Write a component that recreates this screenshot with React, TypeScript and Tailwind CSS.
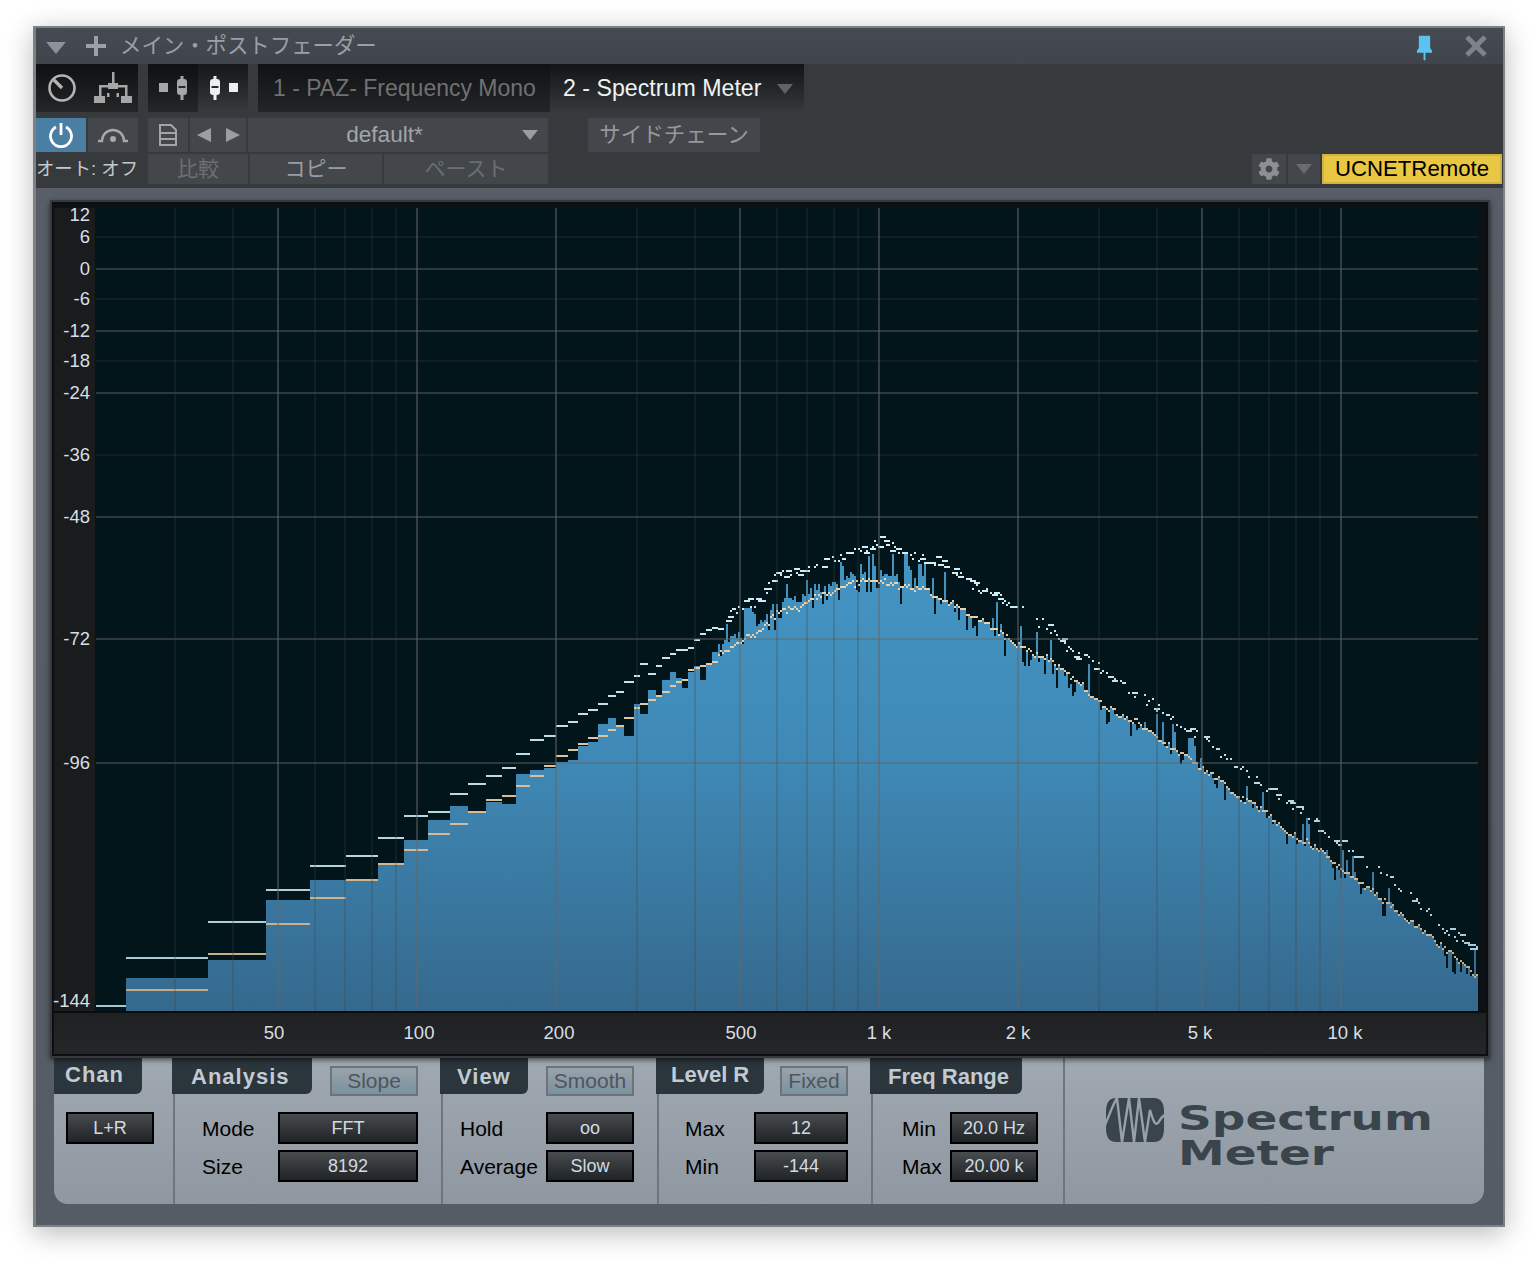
import React from 'react';
import { FaCog } from 'react-icons/fa';

type Seg = [number, number, number, number, number];

// low end of the spectrum: [x0, x1, bar top, average line, peak line]
const LOW_BINS: Seg[] = [
  [96, 126, 1012, 0, 1005], [126, 208, 978, 989, 957], [208, 266, 960, 953, 921], [266, 310, 900, 923, 889],
  [310, 346, 880, 897, 865], [346, 378, 881, 879, 855], [378, 404, 863, 863, 837], [404, 428, 840, 849, 815],
  [428, 450, 820, 833, 811], [450, 468, 806, 823, 793], [468, 486, 812, 811, 783], [486, 502, 802, 799, 775],
  [502, 516, 804, 795, 767], [516, 530, 774, 785, 753], [530, 544, 770, 775, 739], [544, 556, 768, 765, 735],
  [556, 568, 762, 755, 725], [568, 578, 760, 749, 721], [578, 588, 746, 743, 713], [588, 598, 742, 737, 709],
  [598, 608, 724, 735, 703], [608, 616, 718, 729, 695], [616, 624, 726, 725, 691], [624, 634, 736, 717, 681],
  [634, 640, 704, 707, 675], [640, 648, 714, 703, 663], [648, 656, 690, 699, 673], [656, 662, 696, 695, 665],
  [662, 670, 680, 691, 657], [670, 676, 672, 685, 653], [676, 682, 678, 681, 649], [682, 688, 688, 679, 649],
  [688, 694, 672, 669, 647], [694, 700, 666, 667, 639], [700, 706, 680, 665, 633], [706, 712, 664, 663, 629],
  [712, 718, 652, 661, 627],
];

const AVG_CURVE = [[718, 655], [740, 640], [757, 633], [777, 611], [800, 607], [813, 598], [827, 593], [840, 587], [853, 583], [870, 579], [883, 581], [907, 587], [927, 590], [940, 597], [957, 605], [973, 615], [997, 630], [1017, 645], [1033, 652], [1047, 657], [1067, 675], [1080, 683], [1100, 702], [1120, 715], [1140, 723], [1157, 738], [1180, 752], [1200, 767], [1217, 778], [1233, 793], [1253, 803], [1267, 813], [1283, 828], [1303, 840], [1323, 852], [1340, 867], [1360, 882], [1380, 898], [1400, 913], [1420, 928], [1440, 945], [1460, 962], [1478, 978]];
const PEAK_CURVE = [[718, 625], [740, 603], [757, 601], [777, 575], [800, 572], [813, 568], [833, 557], [850, 553], [870, 547], [880, 540], [900, 550], [920, 557], [940, 560], [967, 580], [987, 590], [1007, 602], [1027, 613], [1047, 627], [1067, 647], [1100, 668], [1150, 702], [1180, 723], [1207, 740], [1233, 765], [1267, 787], [1300, 807], [1327, 833], [1360, 857], [1387, 877], [1420, 903], [1447, 930], [1478, 948]];
const SPIKES: Record<number, number> = { 744: 608, 746: 608, 748: 608, 750: 608, 752: 612, 754: 614, 872: 554, 874: 566, 904: 552, 906: 552, 908: 565, 910: 570, 920: 564, 1188: 738, 1190: 738, 1192: 738, 1194: 745 };

function interp(pts: number[][], x: number) {
  for (let i = 1; i < pts.length; i++) {
    if (x <= pts[i][0]) {
      const t = (x - pts[i - 1][0]) / (pts[i][0] - pts[i - 1][0]);
      return pts[i - 1][1] + t * (pts[i][1] - pts[i - 1][1]);
    }
  }
  return pts[pts.length - 1][1];
}

// fixed seed so the noisy part of the spectrum is the same on every load
let seed = 41;
function rnd() {
  seed = (seed * 1664525 + 1013904223) % 4294967296;
  return seed / 4294967296;
}
const snap = (v: number) => Math.round(v / 2) * 2;

const highBins: Seg[] = [];
const peakDots: number[][] = [];
for (let x = 718; x < 1478; x += 2) {
  const avg = snap(interp(AVG_CURVE, x) + (rnd() - 0.5) * 6);
  const peak = interp(PEAK_CURVE, x);
  const r = rnd();
  let top = avg;
  const lift = x < 900 ? 8 : 0;
  if (r < 0.14) top = avg - 4 - rnd() * Math.max(avg - peak - 8, 4);
  else if (r < 0.36) top = avg + 4 + rnd() * (x < 900 ? 8 : 16);
  else top = avg - lift * rnd() - (x < 900 ? 3 : 0);
  if (SPIKES[x]) top = SPIKES[x];
  highBins.push([x, x + 2, snap(top), avg, 0]);
  if (rnd() < (x < 1000 ? 0.72 : 0.6)) {
    const y = snap(peak + (rnd() - 0.5) * 10);
    peakDots.push([x, y, rnd() < (x < 1000 ? 0.45 : 0.15) ? 6 : 2]);
  }
}

const freqX = (f: number) => 417 + 462 * Math.log10(f / 100);
const MINOR_F = [30, 40, 60, 70, 80, 90, 300, 400, 600, 700, 800, 900, 3000, 4000, 6000, 7000, 8000, 9000];
const MAJOR_F = [50, 100, 200, 500, 1000, 2000, 5000, 10000];
const DIM_Y = [237, 299, 361, 455];
const BRIGHT_Y = [269, 331, 393, 517, 639, 763];

const DB_LABELS: [string, number][] = [['12', 215], ['6', 237], ['0', 269], ['-6', 299], ['-12', 331], ['-18', 361], ['-24', 393], ['-36', 455], ['-48', 517], ['-72', 639], ['-96', 763], ['-144', 1001]];
const HZ_LABELS: [string, number][] = [['50', 274], ['100', 419], ['200', 559], ['500', 741], ['1 k', 879], ['2 k', 1018], ['5 k', 1200], ['10 k', 1345]];

function Spectrum() {
  return (
    <svg viewBox="95 208 1383 803" className="block w-[1383px] h-[803px]" shapeRendering="crispEdges">
      <defs>
        <linearGradient id="bar" gradientUnits="userSpaceOnUse" x1="0" y1="550" x2="0" y2="1010">
          <stop offset="0" stopColor="#4495c4" />
          <stop offset="0.45" stopColor="#3f89b6" />
          <stop offset="1" stopColor="#35698d" />
        </linearGradient>
        <linearGradient id="avg" gradientUnits="userSpaceOnUse" x1="0" y1="550" x2="0" y2="1010">
          <stop offset="0" stopColor="#f6d6ac" />
          <stop offset="1" stopColor="#c2a886" />
        </linearGradient>
        <linearGradient id="peak" gradientUnits="userSpaceOnUse" x1="0" y1="530" x2="0" y2="1010">
          <stop offset="0" stopColor="#d0f0fb" />
          <stop offset="1" stopColor="#a8c6d2" />
        </linearGradient>
      </defs>
      <rect x="95" y="208" width="1383" height="803" fill="#02151a" />
      {LOW_BINS.map(([a, b, top]) => <rect key={a} x={a} y={top} width={b - a} height={Math.max(1011 - top, 0)} fill="url(#bar)" />)}
      {highBins.map(([a, b, top]) => <rect key={a} x={a} y={top} width={b - a} height={1011 - top} fill="url(#bar)" />)}
      {LOW_BINS.map(([a, b, , avg]) => avg > 0 && <rect key={a} x={a} y={avg} width={b - a} height="2" fill="url(#avg)" />)}
      {highBins.map(([a, b, , avg]) => <rect key={a} x={a} y={avg} width={b - a} height="2" fill="url(#avg)" />)}
      {LOW_BINS.map(([a, b, , , p]) => <rect key={a} x={a} y={p} width={b - a} height="2" fill="url(#peak)" />)}
      {peakDots.map(([x, y, w]) => <rect key={x} x={x} y={y} width={w} height="2" fill="url(#peak)" />)}
      {DIM_Y.map((y) => <rect key={y} x="96" y={y - 1} width="1382" height="2" fill="#444" fillOpacity="0.25" />)}
      {BRIGHT_Y.map((y) => <rect key={y} x="96" y={y - 1} width="1382" height="2" fill="#666" fillOpacity="0.45" />)}
      {MINOR_F.map((f) => <rect key={f} x={Math.round(freqX(f)) - 1} y="208" width="2" height="803" fill="#444" fillOpacity="0.25" />)}
      {MAJOR_F.map((f) => <rect key={f} x={Math.round(freqX(f)) - 1} y="208" width="2" height="803" fill="#666" fillOpacity="0.5" />)}
    </svg>
  );
}

function Tri({ className, left, right }: { className: string; left?: boolean; right?: boolean }) {
  const pts = left ? '16,0 16,16 0,8' : right ? '0,0 16,8 0,16' : '0,0 18,0 9,11';
  return (
    <svg viewBox={left || right ? '0 0 16 16' : '0 0 18 11'} className={className} fill="currentColor">
      <polygon points={pts} />
    </svg>
  );
}

function StripIcon({ bright, flip }: { bright?: boolean; flip?: boolean }) {
  const c = bright ? '#eceeef' : '#a4a6a8';
  return (
    <svg width="29" height="24" viewBox="0 0 29 24" className={flip ? '-scale-x-100' : ''}>
      <rect x="0" y="7" width="9" height="9" fill={c} />
      <rect x="21.5" y="0" width="3" height="24" fill={c} />
      <rect x="18" y="3" width="10" height="16" rx="3" fill={c} />
      <rect x="19.5" y="10" width="7" height="2" fill="#26282a" />
    </svg>
  );
}

function PanelSelect({ label, className }: { label: string; className: string }) {
  return (
    <div className={'h-8 flex items-center justify-center border-2 border-black bg-gradient-to-b from-[#484c4f] via-[#33373a] to-[#212426] text-[18px] text-[#d3dae1] ' + className}>
      {label}
    </div>
  );
}

function Toggle({ label, className }: { label: string; className: string }) {
  return (
    <div className={'mt-2 h-[30px] flex items-center justify-center border-2 border-[#6d737a] bg-gradient-to-b from-[#9aa2aa] to-[#7a929f] text-[21px] text-[#4f555d] ' + className}>
      {label}
    </div>
  );
}

function PanelTab({ label, className }: { label: string; className: string }) {
  return (
    <div className={'h-9 flex items-center rounded-br-[6px] bg-[#2a353c] text-[22px] font-bold text-[#c2cad2] ' + className}>
      {label}
    </div>
  );
}

function Row({ label, value, labelW, selectW }: { label: string; value: string; labelW: string; selectW: string }) {
  return (
    <div className="flex items-center h-8">
      <span className={'mt-[2px] text-[21px] text-black ' + labelW}>{label}</span>
      <PanelSelect label={value} className={selectW} />
    </div>
  );
}

function Logo() {
  return (
    <div className="ml-[41px] mt-10 flex">
      <svg width="58" height="44" viewBox="0 0 58 44">
        <path d="M10 0 H48 C55 0 58 5 58 14 V30 C58 39 55 44 48 44 H10 C3 44 0 39 0 30 V14 C0 5 3 0 10 0 Z" fill="#3a444b" />
        <path d="M-1 27 C3 18 7 6 11 0 L16 44 L23 0 L28 44 L33 0 L39 44 L44 12 C47 22 49 28 52 25 C54 22 56 18 59 17" fill="none" stroke="#98a0a9" strokeWidth="2.4" />
      </svg>
      <div className="ml-[14px] mt-[3px] font-['DejaVu_Sans',sans-serif] font-bold text-[34px] leading-[35px] text-[#3a444b]">
        <div className="origin-left scale-x-[1.38]">Spectrum</div>
        <div className="origin-left scale-x-[1.38]">Meter</div>
      </div>
    </div>
  );
}

const btn = 'h-full flex items-center justify-center bg-[#43474b]';

export default function App() {
  return (
    <div className="w-[1538px] h-[1268px] bg-white pt-[26px] pl-[33px] font-['Liberation_Sans','Noto_Sans_CJK_JP',sans-serif] overflow-hidden">
      <div className="w-[1472px] h-[1201px] flex flex-col border-2 border-l-[3px] border-[#7d8186] shadow-[0_6px_26px_rgba(0,0,0,0.28)]">
        {/* title bar */}
        <div className="h-9 shrink-0 flex items-center bg-gradient-to-b from-[#464a52] to-[#40444b]">
          <Tri className="ml-[10px] w-5 h-3 mt-1 text-[#8d9299]" />
          <svg width="20" height="20" viewBox="0 0 20 20" className="ml-5 text-[#9ba1a8]" fill="currentColor">
            <rect x="8" y="0" width="4" height="20" />
            <rect x="0" y="8" width="20" height="4" />
          </svg>
          <span className="ml-[14px] text-[21.4px] text-[#9aa0a8]">メイン・ポストフェーダー</span>
          <svg width="17" height="26" viewBox="0 0 18 26" className="ml-auto mt-1 text-[#5bc4ee]" fill="currentColor">
            <path d="M3 0 H15 V13 L17 16 V18 H10 V26 H8 V18 H1 V16 L3 13 Z" />
          </svg>
          <svg width="22" height="22" viewBox="0 0 22 22" className="ml-[32px] mr-4 text-[#7f8388]">
            <path d="M2 2 L20 20 M20 2 L2 20" stroke="currentColor" strokeWidth="5" />
          </svg>
        </div>

        {/* toolbar */}
        <div className="h-[124px] shrink-0 bg-[#363a3d] pr-px">
          <div className="h-12 flex">
            <div className="w-[51px] flex items-center justify-center bg-gradient-to-b from-[#0f1011] to-[#242628]">
              <svg width="30" height="30" viewBox="0 0 30 30" fill="none" stroke="#b4b4b4" strokeWidth="2.6">
                <circle cx="15" cy="15" r="12.5" />
                <path d="M7 7 L15 15" strokeWidth="3.4" />
              </svg>
            </div>
            <div className="w-[51px] flex items-center justify-center bg-gradient-to-b from-[#0f1011] to-[#242628]">
              <svg width="38" height="32" viewBox="0 0 38 32" fill="#a6a6a6">
                <rect x="18" y="0" width="2.5" height="14" />
                <rect x="14" y="11" width="10" height="6" />
                <rect x="6" y="13" width="26" height="2.5" />
                <rect x="5" y="13" width="2.5" height="12" />
                <rect x="31" y="13" width="2.5" height="12" />
                <rect x="0" y="24" width="11" height="7" />
                <rect x="27" y="24" width="11" height="7" />
                <rect x="13" y="21" width="2.5" height="4" />
                <rect x="22.5" y="21" width="2.5" height="4" />
              </svg>
            </div>
            <div className="ml-[10px] w-[50px] flex items-center justify-center bg-gradient-to-b from-[#0f1011] to-[#242628]">
              <StripIcon />
            </div>
            <div className="w-[50px] flex items-center justify-center bg-gradient-to-b from-[#15171a] to-[#363a3d]">
              <StripIcon bright flip />
            </div>
            <div className="ml-[10px] w-[292px] flex items-center pl-[15px] bg-gradient-to-b from-[#111213] to-[#232527] text-[23px] text-[#6f7174]">
              1 - PAZ- Frequency Mono
            </div>
            <div className="w-[254px] flex items-center pl-[13px] bg-gradient-to-b from-[#131416] to-[#363a3d] text-[23.2px] text-[#eef2f5]">
              2 - Spectrum Meter
              <Tri className="ml-4 w-4 h-[10px] mt-[2px] text-[#5f6367]" />
            </div>
          </div>

          <div className="mt-[6px] h-[34px] flex">
            <div className="w-[50px] h-full flex items-center justify-center bg-[#4a7ea3]">
              <svg width="26" height="26" viewBox="0 0 26 26" fill="none" stroke="#fff" strokeWidth="2.8">
                <path d="M8 5 A10.5 10.5 0 1 0 18 5" />
                <path d="M13 1 V13" />
              </svg>
            </div>
            <div className={btn + ' ml-[2px] w-[50px]'}>
              <svg width="30" height="16" viewBox="0 0 30 16" fill="none" stroke="#a8a8a8" strokeWidth="2.4">
                <path d="M0 14 H4 A11 11 0 0 1 26 14 H30" />
                <circle cx="15" cy="12" r="3" fill="#a8a8a8" stroke="none" />
              </svg>
            </div>
            <div className={btn + ' ml-[10px] w-[40px]'}>
              <svg width="18" height="22" viewBox="0 0 18 22" fill="none" stroke="#a4a4a4" strokeWidth="2">
                <path d="M1 1 H12 L17 6 V21 H1 Z" />
                <path d="M1 9 H17 M1 15 H17" />
              </svg>
            </div>
            <div className={btn + ' ml-[2px] w-[56px] gap-[15px]'}>
              <Tri left className="w-[14px] h-[16px] text-[#9c9fa2]" />
              <Tri right className="w-[14px] h-[16px] text-[#9c9fa2]" />
            </div>
            <div className={btn + ' relative ml-[2px] w-[300px] pr-[27px] text-[22.6px] text-[#a2a5a8]'}>
              default*
              <Tri className="absolute right-[10px] top-[12px] w-4 h-[10px] text-[#9a9da0]" />
            </div>
            <div className={btn + ' ml-10 w-[172px] text-[21.5px] text-[#95999d]'}>サイドチェーン</div>
          </div>

          <div className="mt-[2px] h-[30px] flex text-[21px]">
            <div className="w-[102px] flex items-center justify-center text-[18.4px] text-[#c6c9cc] whitespace-nowrap">オート: オフ</div>
            <div className={btn + ' ml-[10px] w-[100px] text-[#6b6f73]'}>比較</div>
            <div className={btn + ' ml-[2px] w-[132px] text-[#9a9ea2]'}>コピー</div>
            <div className={btn + ' ml-[2px] w-[164px] text-[#6b6f73]'}>ペースト</div>
            <div className={btn + ' ml-auto w-[34px]'}>
              <FaCog className="w-[22px] h-[22px] text-[#8c9094]" />
            </div>
            <div className={btn + ' ml-[2px] w-[32px]'}>
              <Tri className="w-4 h-[10px] text-[#686c70]" />
            </div>
            <div className="ml-[2px] w-[180px] flex items-center justify-center border-2 border-[#cfb344] bg-[#e9c743] text-[22.2px] text-black">
              UCNETRemote
            </div>
          </div>
          <div className="h-1" />
        </div>

        {/* main pane */}
        <div className="flex-1 min-h-0 pt-3 bg-gradient-to-b from-[#585e68] to-[#565c66]">
          <div className="relative z-10 ml-[14px] w-[1440px] h-[858px] border-2 border-[#37393c] shadow-[0_2px_5px_rgba(0,0,0,0.55)]">
            <div className="w-full h-full border-2 border-[#0c0e10] flex flex-col bg-gradient-to-r from-[#1a1b1d] to-[#26272a]">
              <div className="h-1 shrink-0 bg-[#0b1114]" />
              <div className="flex h-[803px] shrink-0">
                <div className="relative w-[41px] shrink-0 text-[18.5px] text-[#d8dee4]">
                  {DB_LABELS.map(([t, y]) => (
                    <span key={t} className="absolute right-[5px] -translate-y-1/2 leading-none" style={{ top: y - 208 }}>{t}</span>
                  ))}
                </div>
                <Spectrum />
                <div className="flex-1 bg-[#0b1114]" />
              </div>
              <div className="relative flex-1 border-t-2 border-[#0a0c0e] text-[18.5px] text-[#d8dee4] bg-gradient-to-b from-[#1f2022] to-[#252628]">
                {HZ_LABELS.map(([t, x]) => (
                  <span key={t} className="absolute top-[20px] -translate-x-1/2 -translate-y-1/2 leading-none whitespace-nowrap" style={{ left: x - 54 }}>{t}</span>
                ))}
              </div>
            </div>
          </div>

          {/* control panel */}
          <div className="ml-[18px] w-[1430px] h-[146px] flex rounded-b-[14px] bg-gradient-to-b from-[#a0a8b1] to-[#8f97a0]">
            <div className="w-[119px] shrink-0">
              <PanelTab label="Chan" className="w-[88px] pl-[11px] pb-1 tracking-[1px]" />
              <div className="ml-3 mt-[18px]">
                <PanelSelect label="L+R" className="w-[88px]" />
              </div>
            </div>
            <div className="w-[268px] shrink-0 border-l-2 border-[#6f757c]">
              <div className="flex -ml-[3px]">
                <PanelTab label="Analysis" className="w-[140px] pl-[19px] tracking-[1px]" />
                <Toggle label="Slope" className="ml-[18px] w-[88px]" />
              </div>
              <div className="ml-[27px] mt-4 flex flex-col gap-[6px]">
                <Row label="Mode" value="FFT" labelW="w-[76px]" selectW="w-[140px]" />
                <Row label="Size" value="8192" labelW="w-[76px]" selectW="w-[140px]" />
              </div>
            </div>
            <div className="w-[216px] shrink-0 border-l-2 border-[#6f757c]">
              <div className="flex -ml-[3px]">
                <PanelTab label="View" className="w-[88px] pl-[17px] tracking-[1px]" />
                <Toggle label="Smooth" className="ml-[18px] w-[88px]" />
              </div>
              <div className="ml-[17px] mt-4 flex flex-col gap-[6px]">
                <Row label="Hold" value="oo" labelW="w-[86px]" selectW="w-[88px]" />
                <Row label="Average" value="Slow" labelW="w-[86px]" selectW="w-[88px]" />
              </div>
            </div>
            <div className="w-[214px] shrink-0 border-l-2 border-[#6f757c]">
              <div className="flex -ml-[3px]">
                <PanelTab label="Level R" className="w-[108px] pl-[15px] pb-1" />
                <Toggle label="Fixed" className="ml-4 w-[68px]" />
              </div>
              <div className="ml-[26px] mt-4 flex flex-col gap-[6px]">
                <Row label="Max" value="12" labelW="w-[69px]" selectW="w-[94px]" />
                <Row label="Min" value="-144" labelW="w-[69px]" selectW="w-[94px]" />
              </div>
            </div>
            <div className="w-[192px] shrink-0 border-l-2 border-[#6f757c]">
              <div className="flex -ml-[3px]">
                <PanelTab label="Freq Range" className="w-[152px] pl-[18px]" />
              </div>
              <div className="ml-[29px] mt-[18px] flex flex-col gap-[6px]">
                <Row label="Min" value="20.0 Hz" labelW="w-[48px]" selectW="w-[88px]" />
                <Row label="Max" value="20.00 k" labelW="w-[48px]" selectW="w-[88px]" />
              </div>
            </div>
            <div className="flex-1 border-l-2 border-[#6f757c]">
              <Logo />
            </div>
          </div>
        </div>
      </div>
    </div>
  );
}
